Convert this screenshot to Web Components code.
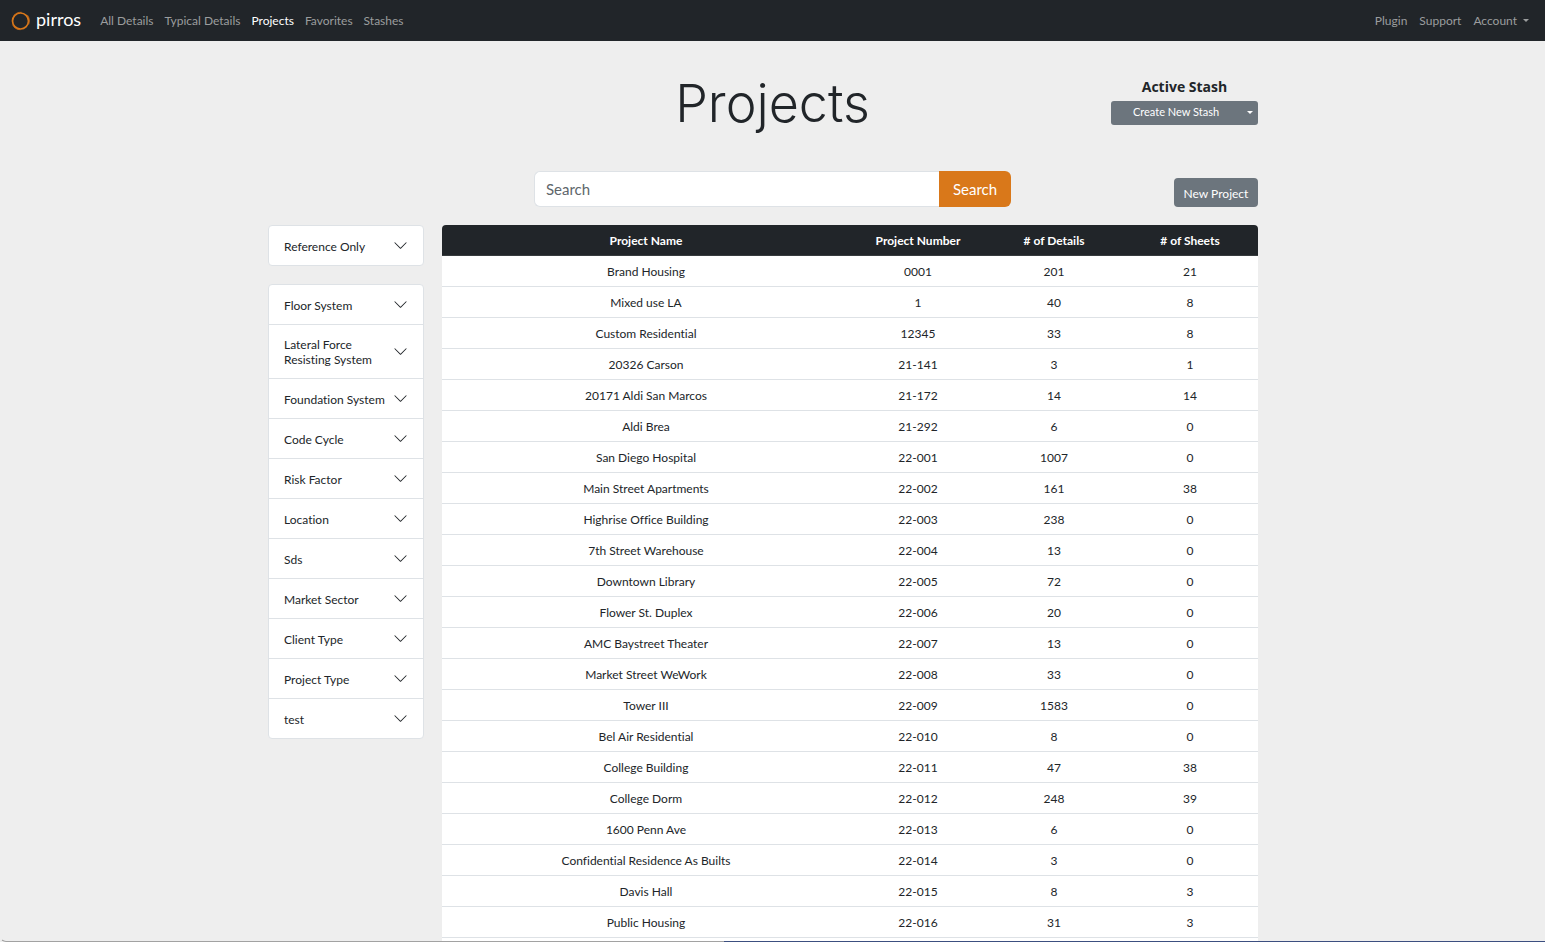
<!DOCTYPE html>
<html lang="en">
<head>
<meta charset="utf-8">
<title>Projects</title>
<style>
  html { --dark: #212529; --muted: #9b9d9e; --line: #dee2e6; --grey: #6c757d; --accent: #d9781a; }
  body { margin: 0; min-height: 100vh; background: #eee; color: #212529;
         font: 12px/15px Lato, "Open Sans", sans-serif; font-variant-ligatures: none; }
</style>
</head>
<body>
<projects-app></projects-app>
<script>
const define = (name, html, setup) => {
  const template = document.createElement('template');
  template.innerHTML = html;
  customElements.define(name, class extends HTMLElement {
    connectedCallback() {
      if (this.shadowRoot) return;
      this.attachShadow({ mode: 'open' }).append(template.content.cloneNode(true));
      if (setup) setup.call(this, this.shadowRoot);
    }
  });
};

define('brand-logo', `
  <style>
    :host { display: block; }
    a { display: flex; align-items: center; gap: 5px; color: #fff; text-decoration: none; font-size: 18px; line-height: 20px; }
    svg { width: 20px; height: 20px; }
    span { padding-bottom: 4px; }
  </style>
  <a href="#"><svg viewBox="0 0 20 20" fill="none" aria-hidden="true">
    <circle cx="9.500" cy="10" r="8" stroke="#d9781a" stroke-width="1.7"/>
    <path d="M2.900 4.600C4.700 2 7.500 1.200 10.200 1.300M16.700 4.500C18.800 7.700 18.500 10 17.800 13M9 18.700C5.500 18.600 3.100 16.800 1.700 14" stroke="#c96c17" stroke-width=".9" stroke-linecap="round"/>
  </svg><span>pirros</span></a>`);

define('nav-item', `
  <style>
    :host { display: block; color: var(--muted); }
    :host([active]) { color: #fff; }
    a { color: inherit; text-decoration: none; }
  </style>
  <a href="#"><slot></slot></a>`);

define('account-menu', `
  <style>
    :host { display: block; }
    button { display: flex; align-items: center; gap: 6px; border: 0; padding: 0; background: none; color: var(--muted); font: inherit; }
    i { border: 3px solid transparent; border-top-color: currentColor; border-bottom: 0; }
  </style>
  <button type="button" aria-haspopup="menu">Account <i></i></button>`);

define('top-nav', `
  <style>
    :host { display: block; background: var(--dark); }
    nav { display: flex; align-items: center; justify-content: space-between; height: 41px; padding: 0 16px 0 11px; }
    div { display: flex; align-items: center; gap: 12px; }
    .start { gap: 11px; }
    brand-logo { margin-right: 8px; }
  </style>
  <nav>
    <div class="start">
      <brand-logo></brand-logo>
      <nav-item>All Details</nav-item><nav-item>Typical Details</nav-item><nav-item active>Projects</nav-item>
      <nav-item>Favorites</nav-item><nav-item>Stashes</nav-item>
    </div>
    <div><nav-item>Plugin</nav-item><nav-item>Support</nav-item><account-menu></account-menu></div>
  </nav>`);

define('stash-picker', `
  <style>
    :host { display: block; width: 147px; text-align: center; }
    h2 { margin: 0 0 4px; font: 700 14px/20px "Open Sans", sans-serif; }
    .split { display: flex; height: 24px; border-radius: 3px; background: var(--grey); }
    button { border: 0; padding: 0 0 3px; background: none; color: #fff; font: inherit; font-size: 11px; }
    .main { flex: 1; }
    .toggle { width: 17px; padding: 0 0 2px; display: grid; place-items: center; }
    i { border: 3px solid transparent; border-top-color: #fff; border-bottom: 0; }
  </style>
  <h2>Active Stash</h2>
  <div class="split"><button class="main" type="button">Create New Stash</button><button class="toggle" type="button" aria-label="Choose stash"><i></i></button></div>`);

define('search-bar', `
  <style>
    :host { display: block; }
    form { display: flex; height: 36px; }
    input { flex: 1; min-width: 0; box-sizing: border-box; border: 1px solid var(--line); border-right: 0; border-radius: 6px 0 0 6px;
            padding: 0 11px; background: #fff; font: inherit; font-size: 15px; color: inherit; }
    input::placeholder { color: #60666b; opacity: 1; }
    button { width: 72px; padding: 0; border: 0; border-radius: 0 6px 6px 0; background: var(--accent); color: #fff; font: inherit; font-size: 15px; }
  </style>
  <form role="search"><input type="text" placeholder="Search" aria-label="Search"><button type="button">Search</button></form>`);

define('filter-item', `
  <style>
    :host { display: block; }
    button { display: flex; align-items: center; justify-content: space-between; gap: 4px; width: 100%; box-sizing: border-box; min-height: 39px;
             padding: 12px 15px 11px; border: 0; background: none; color: inherit; font: inherit; text-align: left; }
    svg { flex: none; width: 15px; height: 15px; }
  </style>
  <button type="button" aria-expanded="false"><span><slot></slot></span>
    <svg viewBox="0 1 16 16" fill="#212529" aria-hidden="true"><path fill-rule="evenodd" d="M1.646 4.646a.5.5 0 0 1 .708 0L8 10.293l5.646-5.647a.5.5 0 0 1 .708.708l-6 6a.5.5 0 0 1-.708 0l-6-6a.5.5 0 0 1 0-.708z"/></svg>
  </button>`);

define('filter-group', `
  <style>
    :host { display: block; border: 1px solid var(--line); border-radius: 4px; background: #fff; }
    ::slotted(filter-item:not(:last-child)) { border-bottom: 1px solid var(--line); }
  </style>
  <slot></slot>`);

const projects = [
  ['Brand Housing', '0001', 201, 21], ['Mixed use LA', '1', 40, 8], ['Custom Residential', '12345', 33, 8],
  ['20326 Carson', '21-141', 3, 1], ['20171 Aldi San Marcos', '21-172', 14, 14], ['Aldi Brea', '21-292', 6, 0],
  ['San Diego Hospital', '22-001', 1007, 0], ['Main Street Apartments', '22-002', 161, 38],
  ['Highrise Office Building', '22-003', 238, 0], ['7th Street Warehouse', '22-004', 13, 0],
  ['Downtown Library', '22-005', 72, 0], ['Flower St. Duplex', '22-006', 20, 0], ['AMC Baystreet Theater', '22-007', 13, 0],
  ['Market Street WeWork', '22-008', 33, 0], ['Tower III', '22-009', 1583, 0], ['Bel Air Residential', '22-010', 8, 0],
  ['College Building', '22-011', 47, 38], ['College Dorm', '22-012', 248, 39], ['1600 Penn Ave', '22-013', 6, 0],
  ['Confidential Residence As Builts', '22-014', 3, 0], ['Davis Hall', '22-015', 8, 3], ['Public Housing', '22-016', 31, 3]
];

define('project-table', `
  <style>
    :host { display: block; background: #fff; border-radius: 4px 4px 0 0; overflow: hidden; padding-bottom: 4px; }
    table { width: 100%; table-layout: fixed; border-collapse: separate; border-spacing: 0; text-align: center; }
    th, td { height: 30px; padding: 0; border-bottom: 1px solid var(--line); }
    th { background: var(--dark); border-bottom-color: #373b3e; color: #fff; font-weight: 700; }
    th:first-child { width: 50%; }
  </style>
  <table><thead><tr><th>Project Name</th><th>Project Number</th><th># of Details</th><th># of Sheets</th></tr></thead><tbody></tbody></table>`,
  root => {
    const body = root.querySelector('tbody');
    for (const project of projects) {
      const row = body.insertRow();
      for (const value of project) row.insertCell().textContent = value;
    }
  });

define('window-edge', `
  <style>
    :host { position: fixed; left: 0; right: 0; bottom: 0; height: 8px; pointer-events: none; box-sizing: border-box;
            border-left: 1px solid transparent; border-bottom: 1px solid #a2a2a2; border-radius: 0 0 0 6px; }
    div { position: absolute; right: 0; bottom: -1px; width: 53.2%; height: 1px; background: #3c4f80; }
  </style><div></div>`);

define('projects-app', `
  <style>
    :host { display: block; }
    main { max-width: 1009px; margin: 0 auto; }
    header { display: grid; grid-template-columns: 1fr auto 1fr; align-items: start; padding-top: 36px; }
    h1 { grid-column: 2; margin: 0; font: 300 52px/54px Inter, sans-serif; }
    stash-picker { justify-self: end; margin-right: 19px; }
    .tools { display: grid; grid-template-columns: 1fr 477px 1fr; align-items: end; padding-top: 40px; }
    search-bar { grid-column: 2; }
    .new { justify-self: end; margin-right: 19px; width: 84px; height: 29px; padding: 2px 0 0; border: 0; border-radius: 4px; background: var(--grey); color: #fff; font: inherit; }
    .content { display: grid; grid-template-columns: 156px minmax(0, 1fr); gap: 18px; padding: 18px 19px 0 0; align-items: start; }
    aside { display: grid; gap: 18px; }
  </style>
  <top-nav></top-nav>
  <main>
    <header><h1>Projects</h1><stash-picker></stash-picker></header>
    <div class="tools"><search-bar></search-bar><button class="new" type="button">New Project</button></div>
    <div class="content">
      <aside>
        <filter-group><filter-item>Reference Only</filter-item></filter-group>
        <filter-group>
          <filter-item>Floor System</filter-item><filter-item>Lateral Force Resisting System</filter-item><filter-item>Foundation System</filter-item>
          <filter-item>Code Cycle</filter-item><filter-item>Risk Factor</filter-item><filter-item>Location</filter-item><filter-item>Sds</filter-item>
          <filter-item>Market Sector</filter-item><filter-item>Client Type</filter-item><filter-item>Project Type</filter-item><filter-item>test</filter-item>
        </filter-group>
      </aside>
      <project-table></project-table>
    </div>
  </main>
  <window-edge></window-edge>`);
</script>
</body>
</html>
